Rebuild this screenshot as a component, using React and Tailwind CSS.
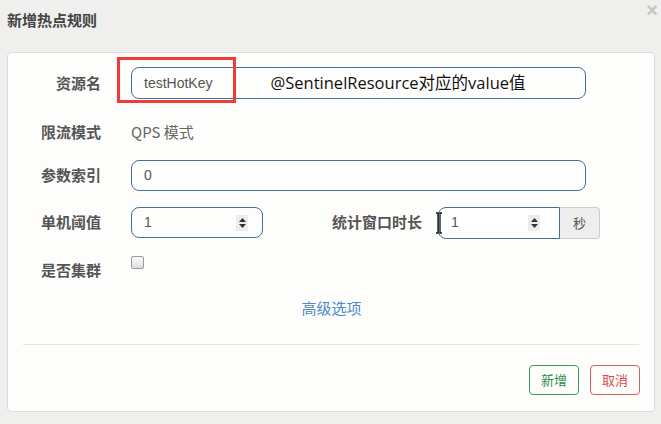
import React from 'react';

const cjk = "font-['Noto_Sans_CJK_SC','Noto_Sans',sans-serif]";

const Spinner = () => (
  <div className="w-[12px] h-[16px] bg-[#ececec] flex flex-col items-center justify-center gap-[2px]">
    <svg width="7" height="4" viewBox="0 0 7 4"><path d="M0 4 L3.5 0 L7 4 Z" fill="#333" /></svg>
    <svg width="7" height="4" viewBox="0 0 7 4"><path d="M0 0 L3.5 4 L7 0 Z" fill="#333" /></svg>
  </div>
);

const Label = ({ children, className = '' }) => (
  <div className={`w-[93px] text-right text-[15px] font-bold text-[#555] ${cjk} ${className}`}>{children}</div>
);

const App = () => {
  return (
    <div className={`relative w-[661px] h-[424px] bg-[#efefed] overflow-hidden ${cjk}`}>
      {/* header */}
      <div className="flex items-center h-[40px] pl-[7px] pt-[1px]">
        <span className="text-[15px] font-bold text-[#444]">新增热点规则</span>
      </div>
      <div className="absolute right-[3px] top-[0px] text-[20px] leading-none font-bold text-[#c4c4c4] font-['Liberation_Sans',sans-serif]">×</div>

      {/* card */}
      <div className="mt-[12px] ml-[7px] w-[648px] h-[360px] bg-[#fdfdfc] border border-[#dcdcdc] rounded-[4px] pt-[14px]">
        {/* 资源名 */}
        <div className="relative flex items-center h-[32px]">
          <Label>资源名</Label>
          <div className="ml-[30px] w-[455px] h-[32px] border border-[#41709c] rounded-[8px] flex items-center pl-[12px]">
            <span className="text-[14px] text-[#555] font-['Liberation_Sans',sans-serif]">testHotKey</span>
            <span className="ml-[58px] text-[16.5px] text-[#111] font-['Open_Sans','Noto_Sans_CJK_SC',sans-serif]">@SentinelResource对应的value值</span>
          </div>
          <div className="absolute left-[109px] top-[-10px] w-[119px] h-[46px] border-[3px] border-[#f23a3a]" />
        </div>

        {/* 限流模式 */}
        <div className="flex items-center h-[32px] mt-[17px]">
          <Label>限流模式</Label>
          <span className="ml-[30px] text-[15px] text-[#666]">QPS 模式</span>
        </div>

        {/* 参数索引 */}
        <div className="flex items-center h-[31px] mt-[12px]">
          <Label>参数索引</Label>
          <div className="ml-[30px] w-[455px] h-[31px] border border-[#41709c] rounded-[8px] flex items-center pl-[12px]">
            <span className="text-[14px] text-[#555] font-['Liberation_Sans',sans-serif]">0</span>
          </div>
        </div>

        {/* 单机阈值 / 统计窗口时长 */}
        <div className="flex items-center h-[31px] mt-[16px]">
          <Label>单机阈值</Label>
          <div className="ml-[30px] w-[132px] h-[31px] border border-[#41709c] rounded-[8px] flex items-center justify-between pl-[12px] pr-[14px]">
            <span className="text-[14px] text-[#555] font-['Liberation_Sans',sans-serif]">1</span>
            <Spinner />
          </div>
          <span className="ml-[69px] text-[15px] font-bold text-[#555]">统计窗口时长</span>
          <div className="relative ml-[16px] flex h-[32px]">
            <div className="w-[122px] h-[32px] border border-[#41709c] rounded-l-[8px] flex items-center justify-between pl-[12px] pr-[19px] bg-white">
              <span className="text-[14px] text-[#555] font-['Liberation_Sans',sans-serif]">1</span>
              <Spinner />
            </div>
            <div className="w-[40px] h-[32px] bg-[#eeeeee] border border-l-0 border-[#cccccc] rounded-r-[4px] flex items-center justify-center text-[13px] text-[#555]">秒</div>
            <svg className="absolute left-[-3px] top-[5px]" width="8" height="22" viewBox="0 0 8 22">
              <path d="M1 1 H3 V21 H1 M7 1 H5 V21 H7" fill="none" stroke="#111" strokeWidth="1.3" />
            </svg>
          </div>
        </div>

        {/* 是否集群 */}
        <div className="flex items-start h-[32px] mt-[17px]">
          <Label className="mt-[4px]">是否集群</Label>
          <div className="ml-[30px] mt-[1px] w-[13px] h-[13px] border border-[#9a9a9a] rounded-[2px] bg-[linear-gradient(#fafafa,#dedede)]" />
        </div>

        {/* 高级选项 */}
        <div className="flex justify-center h-[20px] mt-[10px] pl-[1px]">
          <span className="text-[15px] text-[#4a8bc6]">高级选项</span>
        </div>

        <div className="mx-[15px] mt-[27px] border-t border-[#e3e3e3]" />

        <div className="flex justify-end gap-[11px] pr-[14px] mt-[20px]">
          <div className="w-[50px] h-[30px] border border-[#3a9a55] rounded-[4px] flex items-center justify-center text-[13px] text-[#2f8a47]">新增</div>
          <div className="w-[50px] h-[30px] border border-[#d85c5c] rounded-[4px] flex items-center justify-center text-[13px] text-[#d64b4b]">取消</div>
        </div>
      </div>
    </div>
  );
};

export default App;
